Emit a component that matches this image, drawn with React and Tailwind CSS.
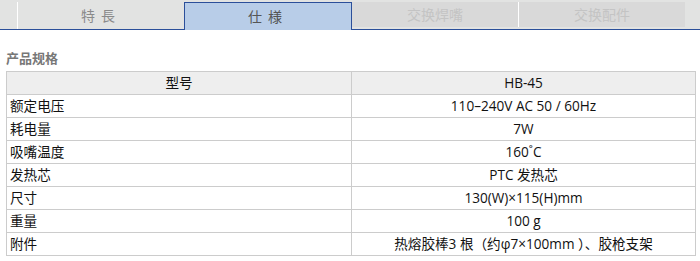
import React from "react";

const rows = [
  ["额定电压", "110–240V AC 50 / 60Hz"],
  ["耗电量", "7W"],
  ["吸嘴温度", "160˚C"],
  ["发热芯", "PTC 发热芯"],
  ["尺寸", "130(W)×115(H)mm"],
  ["重量", "100 g"],
  ["附件", "热熔胶棒3 根（约φ7×100mm ）、胶枪支架"],
];

export default function App() {
  return (
    <div
      className="w-[700px] h-[261px] bg-white overflow-hidden"
      style={{ fontFamily: '"Open Sans", "Noto Sans CJK SC", sans-serif' }}
    >
      <div className="h-[30px] bg-[#e2e3e2] border-b border-[#2b4f9a] flex items-start pl-[17px] pt-[2px]">
        <div className="w-[167px] h-[27px] border-l border-white flex items-center justify-center text-[14px] text-[#8a8a8a] tracking-[6px]">
          特長
        </div>
        <div className="w-[168px] h-[28px] bg-[#b8cde8] border-t border-x border-[#2b4f9a] flex items-center justify-center text-[14px] text-[#555] tracking-[6px] relative z-10">
          仕様
        </div>
        <div className="w-[166px] h-[25px] bg-[#d9d9d9] flex items-center justify-center text-[14px] text-[#c4c4c4]">
          交换焊嘴
        </div>
        <div className="w-[167px] h-[25px] bg-[#d9d9d9] border-l border-white flex items-center justify-center text-[14px] text-[#c4c4c4]">
          交换配件
        </div>
      </div>

      <div className="pl-[6px] pt-[19px] text-[13px] font-bold text-[#777] leading-[18px]">
        产品规格
      </div>

      <table className="ml-[6px] mt-[4px] w-[690px] border-collapse text-[13.6px] text-[#111] table-fixed">
        <colgroup>
          <col className="w-[345px]" />
          <col />
        </colgroup>
        <tbody>
          <tr className="bg-[#eeeeee] h-[23px]">
            <td className="border border-[#cccccc] text-center p-0 leading-[20px]">型号</td>
            <td className="border border-[#cccccc] text-center p-0 leading-[20px]">HB-45</td>
          </tr>
          {rows.map(([k, v]) => (
            <tr key={k} className="h-[23px]">
              <td className="border border-[#cccccc] pl-[3px] p-0 leading-[20px]">{k}</td>
              <td className="border border-[#cccccc] text-center p-0 leading-[20px]">{v}</td>
            </tr>
          ))}
        </tbody>
      </table>
    </div>
  );
}
